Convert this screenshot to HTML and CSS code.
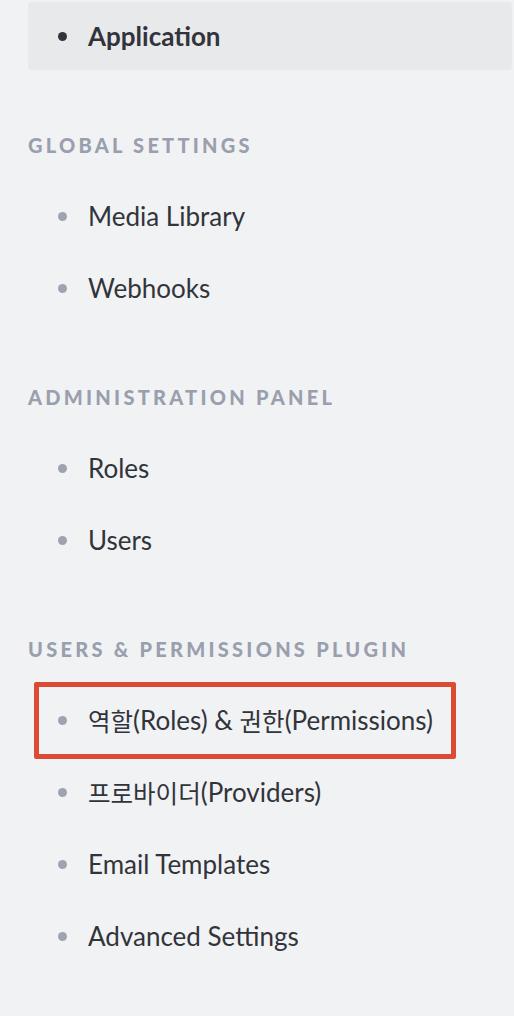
FILE: index.html
```html
<!DOCTYPE html>
<html>
<head>
    <title>Settings</title>
    <link rel="stylesheet" href="styles.css">
</head>
<body>
    <nav class="settings-nav">
        <ul class="nav-list">
            <li class="nav-item active"><span class="bullet"></span>Application</li>
        </ul>

        <h3 class="nav-title">Global Settings</h3>
        <ul class="nav-list">
            <li class="nav-item"><span class="bullet"></span>Media Library</li>
            <li class="nav-item"><span class="bullet"></span>Webhooks</li>
        </ul>

        <h3 class="nav-title">Administration Panel</h3>
        <ul class="nav-list">
            <li class="nav-item"><span class="bullet"></span>Roles</li>
            <li class="nav-item"><span class="bullet"></span>Users</li>
        </ul>

        <h3 class="nav-title">Users &amp; Permissions Plugin</h3>
        <ul class="nav-list">
            <li class="nav-item highlighted"><span class="bullet"></span><span class="ko">역할</span>(Roles) &amp; <span class="ko">권한</span>(Permissions)<span class="mark"></span></li>
            <li class="nav-item"><span class="bullet"></span><span class="ko">프로바이더</span>(Providers)</li>
            <li class="nav-item"><span class="bullet"></span>Email Templates</li>
            <li class="nav-item"><span class="bullet"></span>Advanced Settings</li>
        </ul>
    </nav>
</body>
</html>
```

FILE: styles.css
```css
body {
    margin: 0;
    background-color: #f1f2f4;
    font-family: Lato, "Noto Sans CJK KR", sans-serif;
    color: #32343b;
}

.settings-nav {
    padding: 2px 2px 40px 28px;
}

.nav-list {
    list-style: none;
    margin: 0;
    padding: 0;
}

.nav-item {
    position: relative;
    display: flex;
    align-items: center;
    height: 72px;
    padding-left: 30px;
    font-size: 26px;
    white-space: pre;
}

.ko {
    font-size: 24.5px;
}

.bullet {
    width: 9px;
    height: 9px;
    border-radius: 50%;
    background-color: #9ea3b2;
    margin-right: 21px;
    flex-shrink: 0;
}

.nav-item.active {
    height: 68px;
    font-weight: bold;
    background-color: #e8e9eb;
    border-radius: 4px;
}

.nav-item.active .bullet {
    background-color: #32343b;
}

.nav-title {
    margin: 63px 0 23px 0;
    line-height: 24px;
    font-size: 20px;
    font-weight: 900;
    text-transform: uppercase;
    letter-spacing: 3.25px;
    color: #9a9fae;
}

.nav-list + .nav-title {
    margin-top: 61px;
}

.nav-list:first-child + .nav-title {
    margin-top: 63px;
}

/* red annotation box */
.mark {
    position: absolute;
    left: 6px;
    top: -2px;
    width: 412px;
    height: 67px;
    border: 5px solid #dc4a33;
    border-radius: 2px;
}
```
